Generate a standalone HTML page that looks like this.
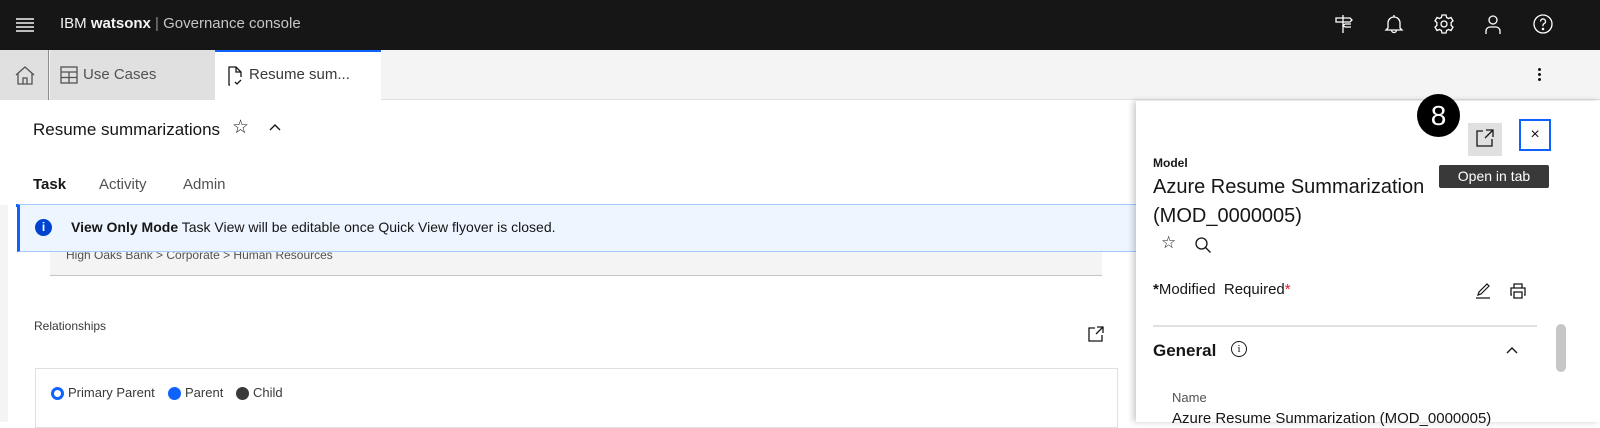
<!DOCTYPE html>
<html><head><style>
*{margin:0;padding:0;box-sizing:border-box}
body{width:1600px;height:422px;overflow:hidden;background:#fff;font-family:"Liberation Sans",sans-serif;color:#161616;position:relative}
.a{position:absolute}
svg{display:block}
</style></head><body>
<div class="a" style="left:0;top:0;width:1600px;height:50px;background:#161616"></div>
<svg class="a" style="left:15;top:15px;left:15px" width="20" height="20"><g stroke="#f4f4f4" stroke-width="1.6"><line x1="1" y1="4" x2="19" y2="4"/><line x1="1" y1="8" x2="19" y2="8"/><line x1="1" y1="12" x2="19" y2="12"/><line x1="1" y1="16" x2="19" y2="16"/></g></svg>
<div class="a" style="left:60px;top:15px;font-size:15px;color:#f4f4f4">IBM <b>watsonx</b> <span style="color:#8d8d8d">|</span> <span style="color:#c6c6c6">Governance console</span></div>
<svg class="a" style="left:1332px;top:12px" width="24" height="24" fill="none" stroke="#fff" stroke-width="1.3"><path d="M11 3v18M4 6h14l2 2-2 2H4zM13 12h6M13 15h6M13 12l-2 1.5 2 1.5"/></svg>
<svg class="a" style="left:1382px;top:12px" width="24" height="24" fill="none" stroke="#fff" stroke-width="1.3"><path d="M12 3v2M6 16V11a6 6 0 0 1 12 0v5l2 2H4zM9.5 18a2.5 2.5 0 0 0 5 0"/></svg>
<svg class="a" style="left:1432px;top:12px" width="24" height="24" fill="none" stroke="#fff" stroke-width="1.3"><circle cx="12" cy="12" r="3"/><path d="M10 3h4l.6 2.5 2 1 2.4-1 2 3.4-1.9 1.7v2.8l1.9 1.7-2 3.4-2.4-1-2 1L14 21h-4l-.6-2.5-2-1-2.4 1-2-3.4 1.9-1.7v-2.8L3 8.9l2-3.4 2.4 1 2-1z"/></svg>
<svg class="a" style="left:1481px;top:12px" width="24" height="24" fill="none" stroke="#fff" stroke-width="1.3"><circle cx="12" cy="8" r="4"/><path d="M5 22v-3a4 4 0 0 1 4-4h6a4 4 0 0 1 4 4v3"/></svg>
<svg class="a" style="left:1531px;top:12px" width="24" height="24" fill="none" stroke="#fff" stroke-width="1.3"><circle cx="12" cy="12" r="9"/><path d="M9.5 9.5a2.5 2.5 0 1 1 3.3 2.3c-.6.3-.8.8-.8 1.4v1"/><circle cx="12" cy="17" r=".6" fill="#fff"/></svg>

<div class="a" style="left:0;top:50px;width:1600px;height:50px;background:#f4f4f4;border-bottom:1px solid #e0e0e0"></div>
<div class="a" style="left:0;top:50px;width:49px;height:50px;background:#e0e0e0;border-right:1px solid #8d8d8d"></div>
<svg class="a" style="left:14px;top:64px" width="22" height="22" fill="none" stroke="#525252" stroke-width="1.3"><path d="M2 11L11 3l9 8M4 9v11h14V9M9 20v-6h4v6"/></svg>
<div class="a" style="left:50px;top:50px;width:165px;height:50px;background:#e0e0e0"></div>
<svg class="a" style="left:59px;top:65px" width="20" height="20" fill="none" stroke="#525252" stroke-width="1.3"><rect x="2" y="2" width="16" height="16"/><path d="M2 7h16M2 12.5h16M10 7v11"/></svg>
<div class="a" style="left:83px;top:66px;font-size:15px;color:#525252">Use Cases</div>
<div class="a" style="left:215px;top:50px;width:166px;height:50px;background:#fff;border-top:2px solid #0f62fe"></div>
<svg class="a" style="left:226px;top:65px" width="20" height="22" fill="none" stroke="#161616" stroke-width="1.3"><path d="M4 20H3V2h7l5 5v5M10 2v5h5M9 17l2 2 4-4"/></svg>
<div class="a" style="left:249px;top:66px;font-size:15px;color:#393939">Resume sum...</div>
<div class="a" style="left:1538px;top:68px;width:3px;height:3px;border-radius:2px;background:#161616;box-shadow:0 5px #161616,0 10px #161616"></div>

<div class="a" style="left:33px;top:120px;font-size:17px">Resume summarizations</div>
<div class="a" style="left:232px;top:116px;font-size:19px">☆</div>
<svg class="a" style="left:268px;top:122px" width="14" height="10" fill="none" stroke="#161616" stroke-width="1.4"><path d="M2 8l5-5 5 5"/></svg>
<div class="a" style="left:33px;top:176px;font-size:15px;font-weight:bold">Task</div>
<div class="a" style="left:99px;top:176px;font-size:15px;color:#525252">Activity</div>
<div class="a" style="left:183px;top:176px;font-size:15px;color:#525252">Admin</div>
<div class="a" style="left:16px;top:204px;width:56px;height:3px;background:#0f62fe"></div>
<div class="a" style="left:72px;top:204px;width:144px;height:3px;background:#c6c6c6"></div>

<div class="a" style="left:0;top:205px;width:8px;height:217px;background:#f4f4f4"></div>
<div class="a" style="left:50px;top:245px;width:1052px;height:31px;background:#f4f4f4;border-bottom:1px solid #c6c6c6"></div>
<div class="a" style="left:66px;top:248px;font-size:12px;color:#525252">High Oaks Bank &gt; Corporate &gt; Human Resources</div>
<div class="a" style="left:17px;top:204px;width:1120px;height:48px;background:#edf5ff;border:1px solid #a6c8ff;border-left:3px solid #0f62fe"></div>
<div class="a" style="left:35px;top:219px;width:17px;height:17px;border-radius:50%;background:#0043ce;color:#fff;font-size:12px;font-weight:bold;text-align:center;line-height:17px">i</div>
<div class="a" style="left:71px;top:219px;font-size:14px"><b>View Only Mode</b> Task View will be editable once Quick View flyover is closed.</div>

<div class="a" style="left:34px;top:319px;font-size:12px;color:#393939">Relationships</div>
<svg class="a" style="left:1087px;top:325px" width="18" height="18" fill="none" stroke="#161616" stroke-width="1.3"><path d="M8 3H2v13h13v-6M10 2h6v6M16 2l-7 7"/></svg>
<div class="a" style="left:35px;top:368px;width:1083px;height:60px;border:1px solid #e0e0e0"></div>
<div class="a" style="left:51px;top:387px;width:13px;height:13px;border-radius:50%;border:3px solid #0f62fe"></div>
<div class="a" style="left:68px;top:385px;font-size:13px;color:#393939">Primary Parent</div>
<div class="a" style="left:168px;top:387px;width:13px;height:13px;border-radius:50%;background:#0f62fe"></div>
<div class="a" style="left:185px;top:385px;font-size:13px;color:#393939">Parent</div>
<div class="a" style="left:236px;top:387px;width:13px;height:13px;border-radius:50%;background:#393939"></div>
<div class="a" style="left:253px;top:385px;font-size:13px;color:#393939">Child</div>

<div class="a" style="left:1136px;top:101px;width:464px;height:321px;background:#fff;box-shadow:-3px 0 6px rgba(0,0,0,.2)"></div>
<div class="a" style="left:1417px;top:94px;width:43px;height:43px;border-radius:50%;background:#000;color:#fff;font-size:28px;text-align:center;line-height:43px">8</div>
<div class="a" style="left:1468px;top:123px;width:34px;height:33px;background:#e0e0e0"></div>
<svg class="a" style="left:1475px;top:128px" width="20" height="20" fill="none" stroke="#161616" stroke-width="1.3"><path d="M8 3H2v15h15v-7M11 2h7v7M18 2l-8 8"/></svg>
<div class="a" style="left:1519px;top:119px;width:32px;height:32px;border:2px solid #0f62fe;text-align:center;line-height:28px;font-size:16px">×</div>
<div class="a" style="left:1439px;top:165px;width:110px;height:23px;background:#393939;border-radius:2px;color:#fff;font-size:14px;text-align:center;line-height:23px">Open in tab</div>
<div class="a" style="left:1153px;top:156px;font-size:12px;font-weight:bold">Model</div>
<div class="a" style="left:1153px;top:173px;font-size:20px;line-height:29px">Azure Resume Summarization<br>(MOD_0000005)</div>
<div class="a" style="left:1161px;top:233px;font-size:17px">☆</div>
<svg class="a" style="left:1194px;top:236px" width="18" height="18" fill="none" stroke="#161616" stroke-width="1.3"><circle cx="7.5" cy="7.5" r="5.5"/><path d="M11.5 11.5l5 5"/></svg>
<div class="a" style="left:1153px;top:281px;font-size:15px"><b>*</b>Modified&nbsp;&nbsp;Required<span style="color:#da1e28">*</span></div>
<svg class="a" style="left:1474px;top:282px" width="18" height="18" fill="none" stroke="#161616" stroke-width="1.2"><path d="M2 16h14M4 13l1-3 8-8 2 2-8 8z"/></svg>
<svg class="a" style="left:1509px;top:282px" width="18" height="18" fill="none" stroke="#161616" stroke-width="1.3"><path d="M5 6V2h8v4M3 13H2V6h14v7h-1M5 10h8v6H5z"/></svg>
<div class="a" style="left:1153px;top:325px;width:384px;height:2px;background:#e0e0e0"></div>
<div class="a" style="left:1556px;top:324px;width:10px;height:48px;border-radius:5px;background:#c6c6c6"></div>
<div class="a" style="left:1153px;top:341px;font-size:17px;font-weight:bold">General</div>
<div class="a" style="left:1231px;top:341px;width:16px;height:16px;border-radius:50%;border:1.3px solid #161616;font-size:11px;text-align:center;line-height:14px;font-family:'Liberation Serif',serif">i</div>
<svg class="a" style="left:1505px;top:345px" width="14" height="10" fill="none" stroke="#161616" stroke-width="1.4"><path d="M2 8l5-5 5 5"/></svg>
<div class="a" style="left:1172px;top:390px;font-size:13px;color:#525252">Name</div>
<div class="a" style="left:1172px;top:410px;font-size:15px;color:#161616">Azure Resume Summarization (MOD_0000005)</div>
</body></html>
